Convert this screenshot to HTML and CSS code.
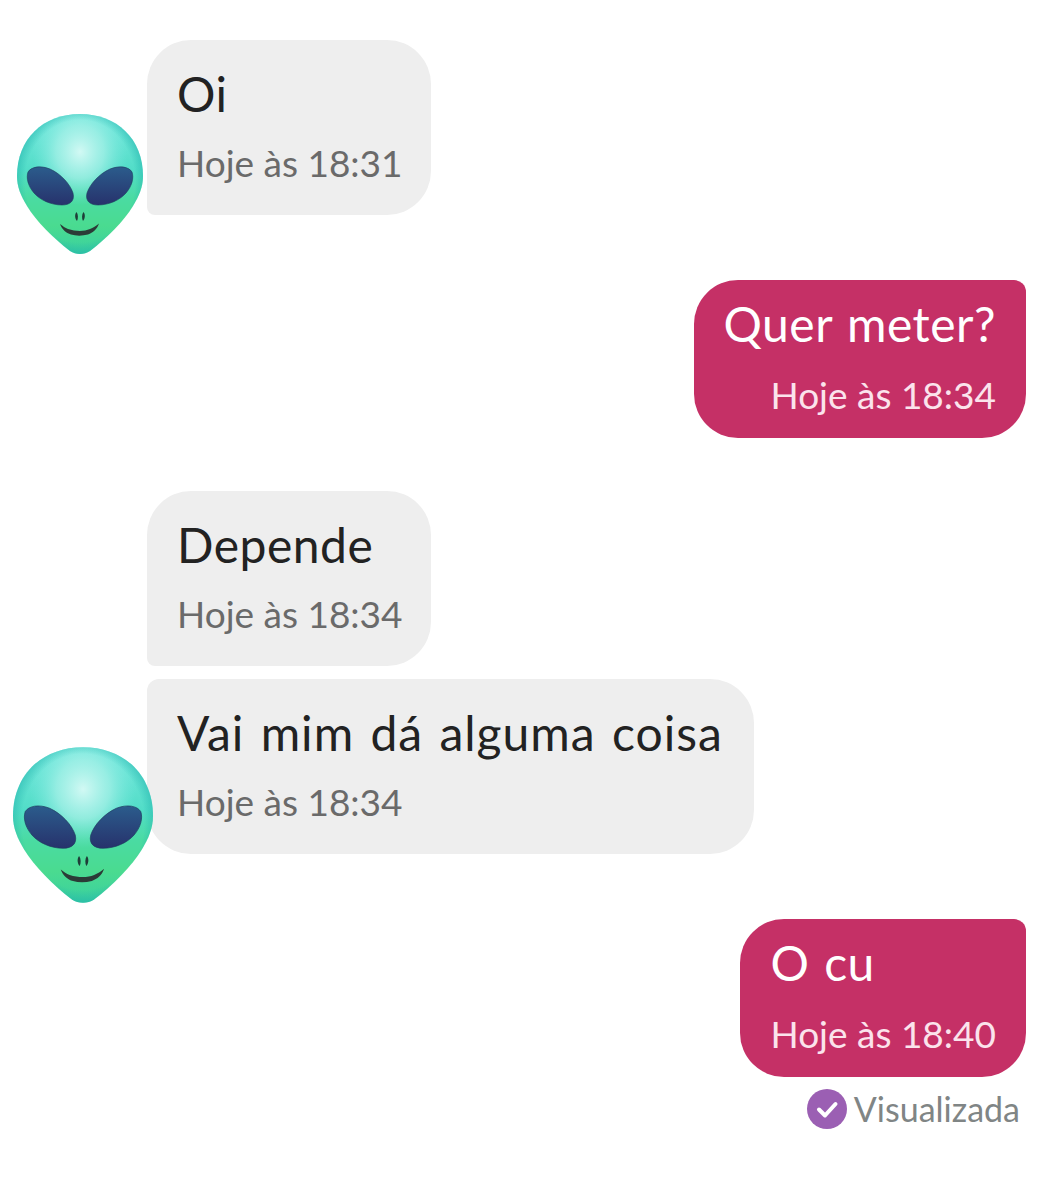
FILE: index.html
```html
<!DOCTYPE html>
<html lang="pt">
<head>
<meta charset="utf-8">
<title>Conversa</title>
<link rel="stylesheet" href="styles.css">
</head>
<body>
<svg class="defs" width="0" height="0" aria-hidden="true">
  <defs>
    <linearGradient id="skin" x1="0" y1="0" x2="0" y2="1">
      <stop offset="0" stop-color="#7ae9df"/>
      <stop offset="0.4" stop-color="#52ddc8"/>
      <stop offset="0.6" stop-color="#4adba2"/>
      <stop offset="0.8" stop-color="#4adb90"/>
      <stop offset="1" stop-color="#3ad0a0"/>
    </linearGradient>
    <radialGradient id="glow" cx="0.5" cy="0.27" r="0.38">
      <stop offset="0" stop-color="#d2f9f4" stop-opacity="1"/>
      <stop offset="0.5" stop-color="#a6f1e8" stop-opacity="0.75"/>
      <stop offset="1" stop-color="#7ae9df" stop-opacity="0"/>
    </radialGradient>
    <radialGradient id="rim" cx="0.5" cy="0.48" r="0.56">
      <stop offset="0.78" stop-color="#1fb2ab" stop-opacity="0"/>
      <stop offset="0.94" stop-color="#1fb2ab" stop-opacity="0.6"/>
      <stop offset="1" stop-color="#14a3a0" stop-opacity="0.95"/>
    </radialGradient>
    <linearGradient id="eye" x1="0" y1="0" x2="0" y2="1">
      <stop offset="0" stop-color="#2b5c8c"/>
      <stop offset="1" stop-color="#27326c"/>
    </linearGradient>
    <symbol id="alien" viewBox="0 0 126 141">
      <path d="M63 0C26 0 0 25 0 62c0 11 4 20 10 30 9 15 26 32 43 45 6 4 14 4 20 0 17-13 34-30 43-45 6-10 10-19 10-30C126 25 100 0 63 0Z" fill="url(#skin)"/>
      <path d="M63 0C26 0 0 25 0 62c0 11 4 20 10 30 9 15 26 32 43 45 6 4 14 4 20 0 17-13 34-30 43-45 6-10 10-19 10-30C126 25 100 0 63 0Z" fill="url(#glow)"/>
      <path d="M63 0C26 0 0 25 0 62c0 11 4 20 10 30 9 15 26 32 43 45 6 4 14 4 20 0 17-13 34-30 43-45 6-10 10-19 10-30C126 25 100 0 63 0Z" fill="url(#rim)"/>
      <path d="M11 58c3-5 12-7 22-3 11 5 20 15 23 24 2 8-3 12-11 12-11 0-22-5-28-12-6-7-8-15-6-21Z" fill="url(#eye)" stroke="#1d3a5c" stroke-width="0.6"/>
      <path d="M115 58c-3-5-12-7-22-3-11 5-20 15-23 24-2 8 3 12 11 12 11 0 22-5 28-12 6-7 8-15 6-21Z" fill="url(#eye)" stroke="#1d3a5c" stroke-width="0.6"/>
      <path d="M59.500 98c1.800 2.500 1.800 6.500 .5 9-2.200-2.500-2.500-6.500-.5-9ZM66.500 98c2 2.500 1.700 6.500-.5 9-1.300-2.500-1.300-6.500.5-9Z" fill="#1f3d38"/>
      <path d="M43 110c3 2 5 4 8 5 8 2.500 16 2.500 22 0 3-1 6-3 9-5.500-2 6-6 9-11 11-6 1.500-12 1.500-17 0-5-1.500-9-5-11-10.500Z" fill="#2b3b37"/>
    </symbol>
  </defs>
</svg>
<main class="chat">
  <div class="row row-in first">
    <svg class="avatar avatar-small"><use href="#alien"/></svg>
    <div class="bubble in">
      <p class="text">Oi</p>
      <p class="time">Hoje às 18:31</p>
    </div>
  </div>
  <div class="row row-out gap-65">
    <div class="bubble out">
      <p class="text">Quer meter?</p>
      <p class="time">Hoje às 18:34</p>
    </div>
  </div>
  <div class="row row-in gap-53">
    <div class="bubble in">
      <p class="text">Depende</p>
      <p class="time">Hoje às 18:34</p>
    </div>
  </div>
  <div class="row row-in gap-13">
    <svg class="avatar avatar-large"><use href="#alien"/></svg>
    <div class="bubble in wide">
      <p class="text">Vai mim dá alguma coisa</p>
      <p class="time">Hoje às 18:34</p>
    </div>
  </div>
  <div class="row row-out gap-65">
    <div class="bubble out">
      <p class="text">O cu</p>
      <p class="time">Hoje às 18:40</p>
    </div>
  </div>
  <div class="seen">
    <svg class="seen-icon" viewBox="0 0 40 40" aria-hidden="true">
      <circle cx="20" cy="20" r="20" fill="#9b5fb3"/>
      <path d="M12 20.500l6 6 10.500-11.500" fill="none" stroke="#fff" stroke-width="4" stroke-linecap="round" stroke-linejoin="round"/>
    </svg>
    <span class="seen-label">Visualizada</span>
  </div>
</main>
</body>
</html>
```
FILE: styles.css
```css
* { box-sizing: border-box; }
html, body { margin: 0; background: #fff; }
body { font-family: "Lato", "Noto Sans", sans-serif; }
.defs { display: block; height: 0; }
.chat { display: flex; flex-direction: column; height: 1200px; padding: 40px 29px 0 147px; }
.row { position: relative; display: flex; }
.row-out { justify-content: flex-end; }
.gap-65 { margin-top: 65px; }
.gap-53 { margin-top: 53px; }
.gap-13 { margin-top: 13px; }
.bubble { padding: 26px 30px 0 30px; }
.in { width: 284px; height: 175px; background: #eeeeee; color: #222; border-radius: 44px 44px 44px 8px; }
.wide { width: auto; padding-right: 31px; border-radius: 12px 44px 44px 44px; }
.out { height: 158px; padding-top: 16px; background: #c53066; color: #fff; border-radius: 44px 12px 44px 44px; text-align: right; }
.out .text { text-align: left; }
.text { margin: 0; font-size: 48px; line-height: 56px; letter-spacing: 0.5px; word-spacing: 2px; white-space: nowrap; }
.wide .text { letter-spacing: 1px; word-spacing: 3px; }
.time { margin: 19px 0 0; font-size: 37px; line-height: 44px; color: #6a6a6a; white-space: nowrap; }
.out .time { margin-top: 21px; color: #fbe3ec; }
.avatar { position: absolute; }
.avatar-small { left: -130px; top: 74px; width: 126px; height: 141px; }
.avatar-large { left: -134px; top: 68px; width: 140px; height: 157px; }
.seen { display: flex; align-items: center; justify-content: flex-end; gap: 7px; margin-top: 12px; padding-right: 6px; }
.seen-icon { width: 40px; height: 40px; }
.seen-label { font-size: 34px; line-height: 40px; color: #808585; }
```
